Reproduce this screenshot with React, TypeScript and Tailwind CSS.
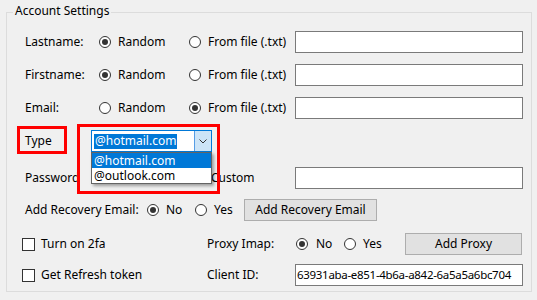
function Radio({ checked, label, width, gap = 'gap-[7px]' }: { checked?: boolean; label: string; width: string; gap?: string }) {
  return (
    <div className={`flex items-center ${gap} ${width} shrink-0`}>
      <span className="w-[12px] h-[12px] rounded-full border border-[#333] bg-white flex items-center justify-center shrink-0">
        {checked && <span className="w-[6px] h-[6px] rounded-full bg-[#333]" />}
      </span>
      <span className="whitespace-nowrap">{label}</span>
    </div>
  );
}

function Checkbox({ label, width }: { label: string; width: string }) {
  return (
    <div className={`flex items-center gap-[6px] ${width} shrink-0`}>
      <span className="w-[13px] h-[13px] border border-[#333] bg-white shrink-0" />
      <span className="whitespace-nowrap">{label}</span>
    </div>
  );
}

function TextBox({ value }: { value?: string }) {
  return (
    <div className="w-[228px] h-[22px] border border-[#7a7a7a] bg-white flex items-center px-[1px] shrink-0 whitespace-nowrap overflow-hidden text-[11.5px] tracking-[-0.3px]">
      {value}
    </div>
  );
}

function Button({ label, width }: { label: string; width: string }) {
  return (
    <div className={`${width} h-[22px] border border-[#adadad] bg-[#e1e1e1] flex items-center justify-center shrink-0`}>
      {label}
    </div>
  );
}

export default function App() {
  return (
    <div
      className="relative w-[537px] h-[300px] bg-[#f0f0f0] text-[12px] text-black leading-none overflow-hidden pt-[12px] pl-[6px]"
      style={{ fontFamily: '"Noto Sans", "DejaVu Sans", sans-serif' }}
    >
      <div className="w-[526px] h-[280px] border border-[#dcdcdc] pt-[18px]">
        {/* Lastname */}
        <div className="flex items-center h-[22px] pl-[18px]">
          <span className="w-[74px] shrink-0">Lastname:</span>
          <Radio checked label="Random" width="w-[90px]" />
          <Radio label="From file (.txt)" width="w-[106px]" />
          <TextBox />
        </div>
        {/* Firstname */}
        <div className="flex items-center h-[22px] pl-[18px] mt-[11px]">
          <span className="w-[74px] shrink-0">Firstname:</span>
          <Radio checked label="Random" width="w-[90px]" />
          <Radio label="From file (.txt)" width="w-[106px]" />
          <TextBox />
        </div>
        {/* Email */}
        <div className="flex items-center h-[22px] pl-[18px] mt-[11px]">
          <span className="w-[74px] shrink-0">Email:</span>
          <Radio label="Random" width="w-[90px]" />
          <Radio checked label="From file (.txt)" width="w-[106px]" />
          <TextBox />
        </div>
        {/* Type */}
        <div className="flex items-center h-[22px] pl-[18px] mt-[11px]">
          <span className="w-[66px] shrink-0">Type</span>
          <div className="w-[121px] h-[22px] border border-[#0078d7] bg-white flex items-stretch">
            <div className="flex-1 flex items-center pl-[2px]">
              <span className="bg-[#0078d7] text-white px-[1px] h-[15px] flex items-center">@hotmail.com</span>
            </div>
            <div className="w-[17px] bg-[#cce4f7] border-l border-[#569de5] flex items-center justify-center">
              <svg width="8" height="5" viewBox="0 0 8 5">
                <path d="M0.5 0.5 L4 4 L7.5 0.5" fill="none" stroke="#333" strokeWidth="1" />
              </svg>
            </div>
          </div>
        </div>
        {/* Password (its radios sit under the open dropdown) */}
        <div className="flex items-center h-[22px] pl-[18px] mt-[15px]">
          <span className="w-[167px] shrink-0">Password</span>
          <Radio label="Custom" width="w-[103px]" />
          <TextBox />
        </div>
        {/* Recovery */}
        <div className="flex items-center h-[22px] pl-[18px] mt-[10px]">
          <span className="w-[122px] shrink-0">Add Recovery Email:</span>
          <Radio checked label="No" width="w-[48px]" />
          <Radio label="Yes" width="w-[49px]" />
          <Button label="Add Recovery Email" width="w-[133px]" />
        </div>
        {/* 2fa / proxy */}
        <div className="flex items-center h-[22px] pl-[15px] mt-[12px]">
          <Checkbox label="Turn on 2fa" width="w-[185px]" />
          <span className="w-[89px] shrink-0">Proxy Imap:</span>
          <Radio checked label="No" width="w-[48px]" gap="gap-[8px]" />
          <Radio label="Yes" width="w-[61px]" gap="gap-[7px]" />
          <Button label="Add Proxy" width="w-[117px]" />
        </div>
        {/* refresh / client id */}
        <div className="flex items-center h-[22px] pl-[15px] mt-[9px]">
          <Checkbox label="Get Refresh token" width="w-[185px]" />
          <span className="w-[88px] shrink-0">Client ID:</span>
          <TextBox value="63931aba-e851-4b6a-a842-6a5a5a6bc704" />
        </div>
      </div>

      {/* group title */}
      <span className="absolute left-[13px] top-[5px] bg-[#f0f0f0] px-[2px]">Account Settings</span>

      {/* open dropdown list */}
      <div className="absolute left-[91px] top-[152px] w-[121px] h-[32px] border border-[#646464] bg-white shadow-[2px_2px_3px_rgba(0,0,0,0.35)]">
        <div className="h-[15px] bg-[#0078d7] text-white flex items-center pl-[2px]">@hotmail.com</div>
        <div className="h-[15px] flex items-center pl-[2px]">@outlook.com</div>
      </div>

      {/* annotation boxes */}
      <div className="absolute left-[17px] top-[126px] w-[50px] h-[28px] border-[3px] border-[#ff0000]" />
      <div className="absolute left-[77px] top-[124px] w-[143px] h-[70px] border-[3px] border-[#ff0000]" />
    </div>
  );
}
